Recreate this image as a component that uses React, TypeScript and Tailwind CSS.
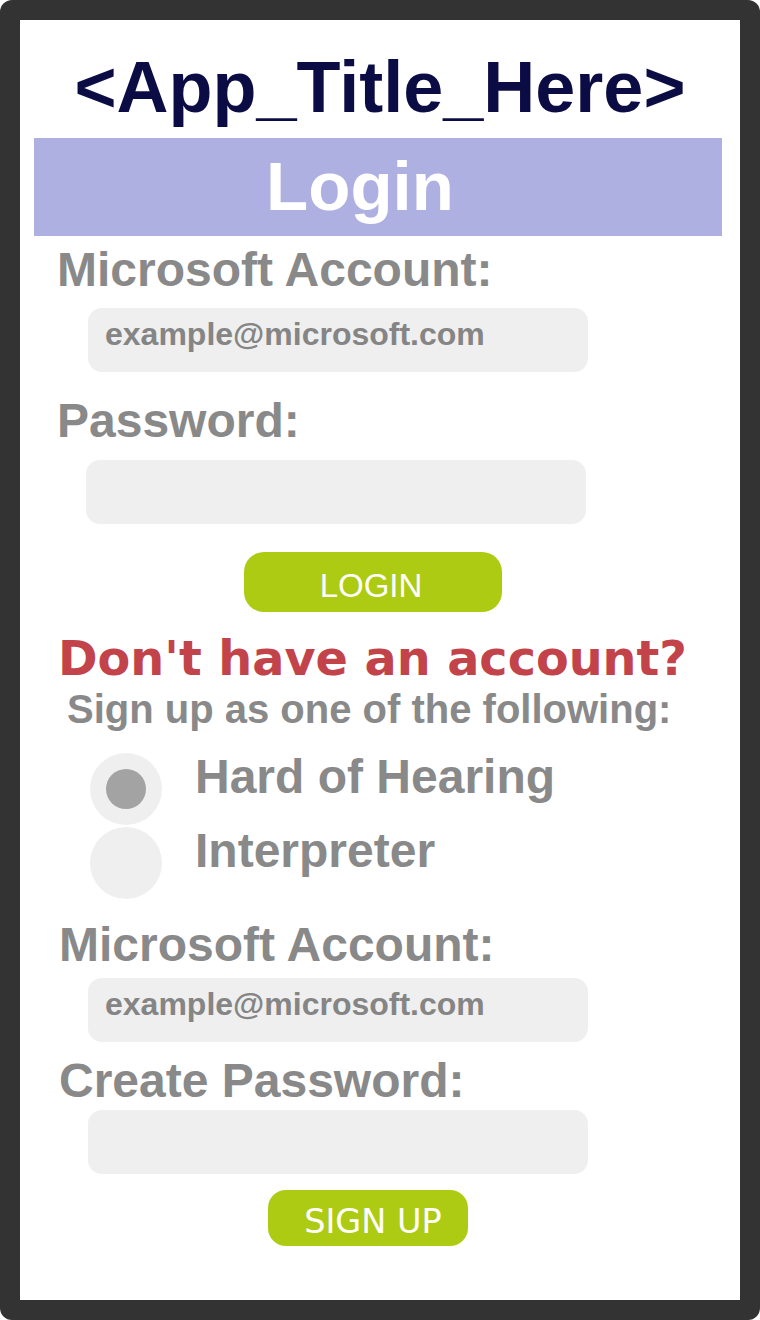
import React from "react";

const sans = "font-['Liberation_Sans',Arial,sans-serif]";

function Label({ text, cls }: { text: string; cls: string }) {
  return (
    <div
      className={`${sans} font-bold text-[48px] leading-[48px] text-[#898989] whitespace-nowrap ${cls}`}
    >
      {text}
    </div>
  );
}

function Field({ placeholder, cls }: { placeholder?: string; cls: string }) {
  return (
    <div
      className={`w-[500px] h-[64px] rounded-[14px] bg-[#efefef] pl-[17px] pt-[10px] ${cls}`}
    >
      {placeholder ? (
        <span
          className={`${sans} font-bold text-[32px] leading-[32px] text-[#858585] whitespace-nowrap`}
        >
          {placeholder}
        </span>
      ) : null}
    </div>
  );
}

export default function App() {
  return (
    <div className="w-[760px] h-[1320px] bg-white">
      <div className="w-[760px] h-[1320px] bg-[#333333] rounded-[12px] p-[20px]">
        <div className="w-full h-full bg-white flex flex-col items-start">
          <div
            className={`${sans} self-stretch text-center font-bold text-[72px] leading-[72px] text-[#0c0c44] mt-[31px] whitespace-nowrap`}
          >
            &lt;App_Title_Here&gt;
          </div>
          <div className="ml-[14px] mt-[15px] w-[688px] h-[98px] bg-[#aeb0e1] flex items-center justify-center pr-[36px]">
            <span
              className={`${sans} font-bold text-[69px] leading-[68px] text-white`}
            >
              Login
            </span>
          </div>

          <Label text="Microsoft Account:" cls="ml-[37px] mt-[10px]" />
          <Field placeholder="example@microsoft.com" cls="ml-[68px] mt-[14px]" />

          <Label text="Password:" cls="ml-[37px] mt-[25px]" />
          <Field cls="ml-[66px] mt-[15px]" />

          <div className="ml-[224px] mt-[28px] w-[258px] h-[60px] rounded-[20px] bg-[#adcb13] flex items-center justify-center pt-[7px] pr-[4px]">
            <span
              className={`${sans} text-[33px] leading-[33px] text-white`}
            >
              LOGIN
            </span>
          </div>

          <div className="ml-[38px] mt-[23px] font-['DejaVu_Sans',Verdana,sans-serif] font-bold text-[47.7px] leading-[47px] text-[#c2444a] whitespace-nowrap">
            Don&apos;t have an account?
          </div>
          <div
            className={`${sans} ml-[47px] mt-[7px] font-bold text-[40px] leading-[40px] text-[#898989] whitespace-nowrap`}
          >
            Sign up as one of the following:
          </div>

          <div className="ml-[70px] mt-[24px] flex items-start">
            <div className="w-[72px] h-[72px] rounded-full bg-[#efefef] flex items-center justify-center">
              <div className="w-[40px] h-[40px] rounded-full bg-[#a3a3a3] blur-[0.6px]" />
            </div>
            <div
              className={`${sans} ml-[33px] font-bold text-[48px] leading-[48px] text-[#898989] whitespace-nowrap`}
            >
              Hard of Hearing
            </div>
          </div>
          <div className="ml-[70px] mt-[2px] flex items-start">
            <div className="w-[72px] h-[72px] rounded-full bg-[#efefef]" />
            <div
              className={`${sans} ml-[33px] font-bold text-[48px] leading-[48px] text-[#898989] whitespace-nowrap`}
            >
              Interpreter
            </div>
          </div>

          <Label text="Microsoft Account:" cls="ml-[39px] mt-[22px]" />
          <Field placeholder="example@microsoft.com" cls="ml-[68px] mt-[9px]" />

          <Label text="Create Password:" cls="ml-[39px] mt-[15px]" />
          <Field cls="ml-[68px] mt-[5px]" />

          <div className="ml-[248px] mt-[16px] w-[200px] h-[56px] rounded-[18px] bg-[#adcb13] flex items-center justify-center pt-[8px] pl-[10px]">
            <span className="font-['DejaVu_Sans',Verdana,sans-serif] text-[33.5px] leading-[32px] text-white whitespace-nowrap">
              SIGN UP
            </span>
          </div>
        </div>
      </div>
    </div>
  );
}
